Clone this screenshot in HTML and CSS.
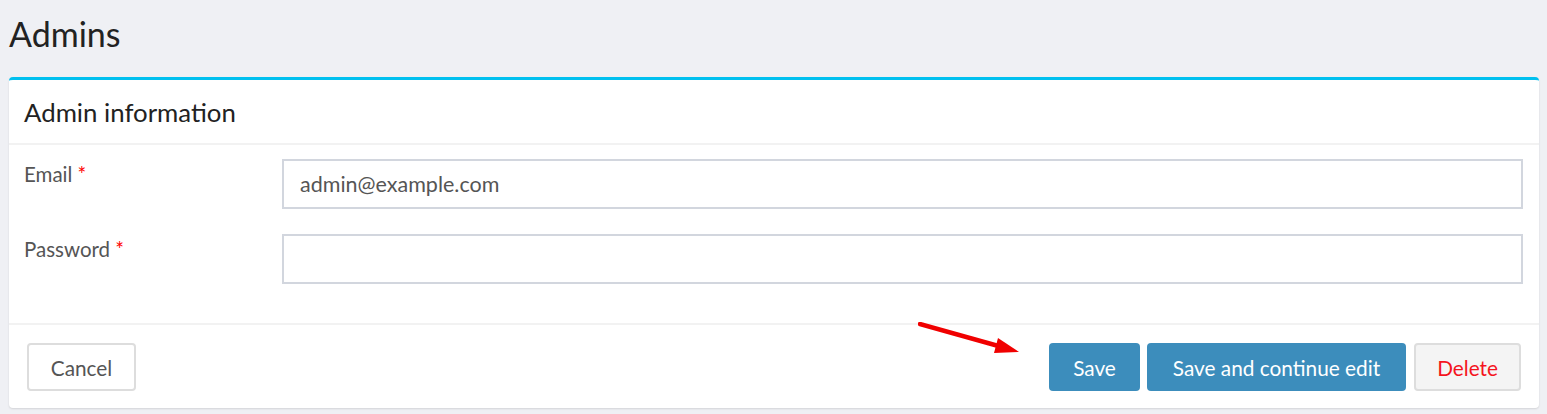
FILE: index.html
```html
<!DOCTYPE html>
<html>
<head>
<meta charset="utf-8">
<link rel="stylesheet" href="styles.css">
</head>
<body>
<div class="page">
  <h1 class="page-title">Admins</h1>
  <div class="box">
    <div class="box-header">
      <h3 class="box-title">Admin information</h3>
    </div>
    <div class="box-body">
      <div class="form-row">
        <label class="form-label">Email <span class="req">*</span></label>
        <div class="form-field"><input class="form-input" type="text" value="admin@example.com"></div>
      </div>
      <div class="form-row">
        <label class="form-label">Password <span class="req">*</span></label>
        <div class="form-field"><input class="form-input" type="password" value=""></div>
      </div>
    </div>
    <div class="box-footer">
      <button class="btn btn-default">Cancel</button>
      <div class="actions">
        <button class="btn btn-primary">Save</button>
        <button class="btn btn-primary btn-wide">Save and continue edit</button>
        <button class="btn btn-delete">Delete</button>
      </div>
      <svg class="arrow" width="110" height="40" viewBox="0 0 110 40">
        <line x1="2" y1="2" x2="84" y2="25" stroke="#f00000" stroke-width="4.5" stroke-linecap="round"/>
        <polygon points="80,16 76,31 101,30" fill="#f00000"/>
      </svg>
    </div>
  </div>
</div>
</body>
</html>
```

FILE: styles.css
```css
* { box-sizing: border-box; }
html, body { margin: 0; padding: 0; }
body {
  background: #eff0f4;
  font-family: "Lato", "Open Sans", sans-serif;
  color: #222;
}
.page {
  padding: 14px 8px 6px 9px;
}
.page-title {
  margin: 0 0 23px 0;
  font-weight: 400;
  font-size: 34px;
  line-height: 40px;
  color: #222;
}
.box {
  position: relative;
  background: #fff;
  border-top: 3px solid #00c0ef;
  border-radius: 4px;
  box-shadow: 0 1px 2px rgba(0,0,0,0.12);
}
.box-header {
  height: 65px;
  padding: 0 15px;
  display: flex;
  align-items: center;
  border-bottom: 2px solid #f2f2f2;
}
.box-title {
  margin: 0;
  font-weight: 400;
  font-size: 25.8px;
  color: #222;
}
.box-body {
  padding: 14px 16px 14px 15px;
}
.form-row {
  display: flex;
  margin-bottom: 25px;
}
.form-label {
  width: 258px;
  flex: none;
  font-size: 20.5px;
  color: #555;
  padding-top: 3px;
}
.req { color: #f00; }
.form-field { flex: 1; }
.form-input {
  display: block;
  width: 100%;
  height: 50px;
  border: 2px solid #d2d6de;
  border-radius: 0;
  padding: 0 16px;
  font-family: inherit;
  font-size: 21.5px;
  color: #555;
  outline: none;
}
.box-footer {
  display: flex;
  align-items: center;
  justify-content: space-between;
  border-top: 2px solid #f2f2f2;
  padding: 18px 18px 17px 18px;
}
.actions {
  display: flex;
  gap: 7px;
}
.btn {
  height: 48px;
  font-family: inherit;
  font-size: 20.8px;
  border-radius: 4px;
  padding: 0 22px;
  cursor: pointer;
}
.btn-default {
  background: #fff;
  border: 2px solid #ddd;
  color: #555;
  width: 109px;
  padding: 0;
}
.btn-primary {
  background: #3c8dbc;
  border: none;
  color: #fff;
  padding: 0 24px;
}
.btn-wide { padding: 0 26px; }
.btn-primary + .btn-delete { margin-left: 1px; }
.btn-delete {
  background: #f4f4f4;
  border: 2px solid #ddd;
  color: #f4141e;
  padding: 0 21px;
}
.arrow {
  position: absolute;
  left: 909px;
  top: 242px;
}
```
